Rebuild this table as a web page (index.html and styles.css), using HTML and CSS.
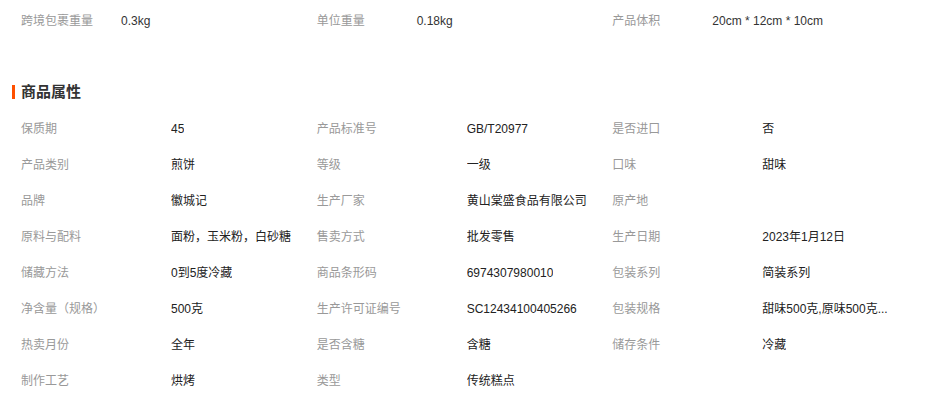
FILE: index.html
```html
<!DOCTYPE html>
<html lang="zh-CN">
  <head>
    <meta charset="UTF-8" />
    <meta name="viewport" content="width=device-width, initial-scale=1.0" />
    <title>商品属性</title>
    <link rel="stylesheet" href="styles.css">
  </head>
  <body>
    <div class="detail">
      <ul class="pack">
        <li><span class="pack-name">跨境包裹重量</span><span class="pack-value">0.3kg</span></li>
        <li><span class="pack-name">单位重量</span><span class="pack-value">0.18kg</span></li>
        <li><span class="pack-name">产品体积</span><span class="pack-value">20cm * 12cm * 10cm</span></li>
      </ul>

      <h2 class="title">商品属性</h2>

      <ul class="attrs">
        <li><span class="attr-name">保质期</span><span class="attr-value">45</span></li>
        <li><span class="attr-name">产品标准号</span><span class="attr-value">GB/T20977</span></li>
        <li><span class="attr-name">是否进口</span><span class="attr-value">否</span></li>

        <li><span class="attr-name">产品类别</span><span class="attr-value">煎饼</span></li>
        <li><span class="attr-name">等级</span><span class="attr-value">一级</span></li>
        <li><span class="attr-name">口味</span><span class="attr-value">甜味</span></li>

        <li><span class="attr-name">品牌</span><span class="attr-value">徽城记</span></li>
        <li><span class="attr-name">生产厂家</span><span class="attr-value">黄山棠盛食品有限公司</span></li>
        <li><span class="attr-name">原产地</span><span class="attr-value"></span></li>

        <li><span class="attr-name">原料与配料</span><span class="attr-value">面粉，玉米粉，白砂糖</span></li>
        <li><span class="attr-name">售卖方式</span><span class="attr-value">批发零售</span></li>
        <li><span class="attr-name">生产日期</span><span class="attr-value">2023年1月12日</span></li>

        <li><span class="attr-name">储藏方法</span><span class="attr-value">0到5度冷藏</span></li>
        <li><span class="attr-name">商品条形码</span><span class="attr-value">6974307980010</span></li>
        <li><span class="attr-name">包装系列</span><span class="attr-value">简装系列</span></li>

        <li><span class="attr-name">净含量（规格）</span><span class="attr-value">500克</span></li>
        <li><span class="attr-name">生产许可证编号</span><span class="attr-value">SC12434100405266</span></li>
        <li><span class="attr-name">包装规格</span><span class="attr-value">甜味500克,原味500克...</span></li>

        <li><span class="attr-name">热卖月份</span><span class="attr-value">全年</span></li>
        <li><span class="attr-name">是否含糖</span><span class="attr-value">含糖</span></li>
        <li><span class="attr-name">储存条件</span><span class="attr-value">冷藏</span></li>

        <li><span class="attr-name">制作工艺</span><span class="attr-value">烘烤</span></li>
        <li><span class="attr-name">类型</span><span class="attr-value">传统糕点</span></li>
      </ul>
    </div>
  </body>
</html>
```

FILE: styles.css
```css
body {
  background: #fff;
  color: #333;
  font-family: Tahoma, "Liberation Sans", "Noto Sans CJK SC", sans-serif;
  font-size: 12px;
  margin: 0;
}

ul {
  list-style: none;
  margin: 0;
  padding: 0;
}

.detail {
  padding: 3px 29px 0 21px;
}

.pack,
.attrs {
  display: grid;
  grid-template-columns: repeat(3, minmax(0, 1fr));
}

.pack li,
.attrs li {
  display: flex;
  height: 36px;
  line-height: 36px;
  min-width: 0;
  white-space: nowrap;
}

.pack-name {
  color: #999;
  width: 100px;
}

.pack-value {
  color: #333;
}

.title {
  border-left: 3px solid #ff5000;
  color: #333;
  font-size: 15px;
  font-weight: bold;
  height: 14px;
  line-height: 14px;
  margin: 46px 0 12px -9px;
  padding-left: 6px;
}

.attr-name {
  color: #999;
  flex: none;
  width: 150px;
}

.attr-value {
  color: #222;
  min-width: 0;
  overflow: hidden;
  text-overflow: ellipsis;
}
```
